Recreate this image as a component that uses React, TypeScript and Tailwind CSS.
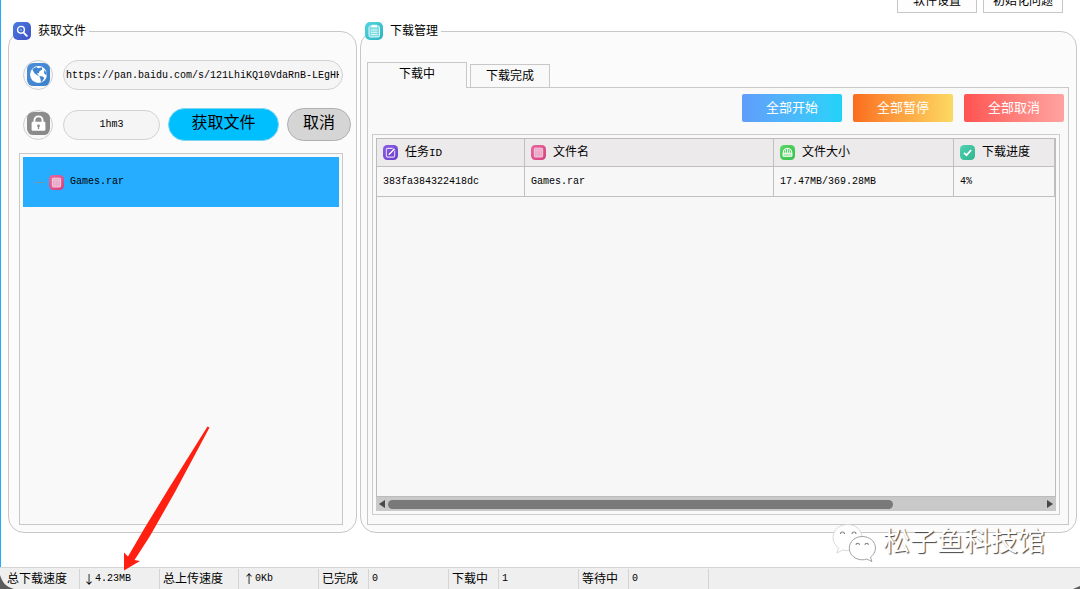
import type { ReactNode } from "react";

const LATIN = "font-['Liberation_Mono','Noto_Sans_CJK_SC',monospace] text-[10px]";

function Tile({ size, children, from, to, id }: { size: number; children: ReactNode; from: string; to: string; id: string }) {
  return (
    <svg width={size} height={size} viewBox="0 0 18 18" className="shrink-0" aria-hidden="true">
      <defs>
        <linearGradient id={id} x1="0" y1="0" x2="1" y2="1">
          <stop offset="0" stopColor={from} />
          <stop offset="1" stopColor={to} />
        </linearGradient>
      </defs>
      <rect width="18" height="18" rx="5" fill={`url(#${id})`} />
      {children}
    </svg>
  );
}

function SearchIcon() {
  return (
    <Tile size={18} id="search" from="#4a7be0" to="#3f52c4">
      <circle cx="8" cy="7.8" r="3.4" fill="none" stroke="#fff" strokeWidth="1.4" />
      <path d="M10.6 10.6 13.8 13.8" stroke="#fff" strokeWidth="1.9" strokeLinecap="round" />
      <circle cx="8" cy="7.8" r=".9" fill="#a9bff0" />
    </Tile>
  );
}

function ClipboardIcon() {
  return (
    <Tile size={18} id="clip" from="#52d6e0" to="#2bb3c0">
      <rect x="4" y="4" width="10.5" height="11" rx="1.5" fill="#7edbe2" stroke="#e6fbfc" strokeWidth="1" />
      <path d="M6.5 2.8h5.5v2.6H6.5z" fill="#f2fdfd" />
      <path d="M6 8h6.5M6 10.3h6.5M6 12.6h6.5" stroke="#eafcfc" strokeWidth=".9" />
    </Tile>
  );
}

function GlobeIcon() {
  return (
    <Tile size={23} id="globe" from="#4b90d8" to="#3a80cc">
      <circle cx="9" cy="9" r="6.6" fill="#fff" />
      <path d="M4.2 4.6 7.3 3.2 8.800 4.1 11.6 3.4 12 5 9.800 6.4 9.2 8 7.5 8.2 9.3 9.6 8.6 10 6.2 8.4 4.8 6.3z" fill="#3f86d0" />
      <path d="M9.6 10.2 12.2 10.6 13.6 11.8 11.9 14.3 10.9 14.8 10.5 12.4z" fill="#3f86d0" />
      <path d="M13.3 5.4 15.4 7.4 15.4 9.8 13.5 8.2z" fill="#3f86d0" />
    </Tile>
  );
}

function LockIcon() {
  return (
    <Tile size={23} id="lock" from="#8f8f8f" to="#888888">
      <path d="M5.800 8.4V6.6a3.200 3.200 0 0 1 6.400 0v1.8" fill="none" stroke="#fff" strokeWidth="1.5" />
      <rect x="3.6" y="7.6" width="10.8" height="7" rx="1" fill="#fff" />
      <circle cx="9" cy="10.8" r="1.1" fill="#888" />
      <path d="M8.5 11h1v2.3h-1z" fill="#888" />
    </Tile>
  );
}

function EditIcon() {
  return (
    <Tile size={15} id="edit" from="#8a5ce6" to="#6a3fc8">
      <rect x="4" y="4" width="10" height="10.5" rx="1.5" fill="none" stroke="#e4d8fb" strokeWidth="1.3" />
      <path d="M7 11.6 14.2 4" stroke="#7344cf" strokeWidth="3.6" />
      <path d="M7 11.6 13.8 4.4" stroke="#fff" strokeWidth="1.8" />
    </Tile>
  );
}

function FileIcon({ id }: { id: string }) {
  return (
    <Tile size={15} id={id} from="#e86a9e" to="#d63f80">
      <rect x="4" y="3.8" width="10" height="10.6" rx="1" fill="#e9a6c5" stroke="#f6dbe7" strokeWidth="1" />
      <path d="M7.2 4v10M10.8 4v10M4 6.8h10" stroke="#f2c6da" strokeWidth=".7" />
    </Tile>
  );
}

function SizeIcon() {
  return (
    <Tile size={15} id="size" from="#58d860" to="#38c050">
      <path d="M3.8 9.6C4 6.2 6 4.2 9 4.2s5 2 5.2 5.4" fill="none" stroke="#fff" strokeWidth="1.3" />
      <path d="M9 4v5.5M6.8 6v3.5M11.2 6v3.5" stroke="#fff" strokeWidth="1" />
      <rect x="3.4" y="9.6" width="11.2" height="4.2" rx=".8" fill="#d9f7dc" stroke="#fff" strokeWidth=".8" />
      <path d="M5 12h8" stroke="#64d36e" strokeWidth=".8" />
    </Tile>
  );
}

function CheckIcon() {
  return (
    <Tile size={15} id="check" from="#4fd0b4" to="#30b68c">
      <path d="M4.8 9.4 7.8 12.2 13.4 6" fill="none" stroke="#fff" strokeWidth="2.1" />
    </Tile>
  );
}

function Badge({ children }: { children: ReactNode }) {
  return (
    <span className="flex size-[30px] shrink-0 items-center justify-center rounded-full border border-[#cfcfcf] bg-[#f8f8f8] pb-0.5">
      {children}
    </span>
  );
}

function Head({ icon, children, className = "" }: { icon: ReactNode; children: ReactNode; className?: string }) {
  return (
    <th scope="col" className={`h-[28px] border-r border-b border-[#c0c0c0] p-0 text-left font-normal ${className}`}>
      <div className="flex items-center gap-[7px] pb-px pl-1.5 whitespace-nowrap">
        {icon}
        <span>{children}</span>
      </div>
    </th>
  );
}

const status: { text: string; label: boolean; width: string }[] = [
  { text: "总下载速度", label: true, width: "w-20 pl-[7px]" },
  { text: "↓4.23MB", label: false, width: "w-20 pl-[3px]" },
  { text: "总上传速度", label: true, width: "w-[79px] pl-[3px]" },
  { text: "↑0Kb", label: false, width: "w-20 pl-1" },
  { text: "已完成", label: true, width: "w-[50px] pl-[3px]" },
  { text: "0", label: false, width: "w-20 pl-[3px]" },
  { text: "下载中", label: true, width: "w-[50px] pl-[3px]" },
  { text: "1", label: false, width: "w-20 pl-[3px]" },
  { text: "等待中", label: true, width: "w-[50px] pl-[3px]" },
  { text: "0", label: false, width: "w-20 pl-[3px]" },
];

export default function App() {
  return (
    <div className="relative flex min-h-screen flex-col overflow-hidden bg-white font-['Liberation_Sans','Noto_Sans_CJK_SC',sans-serif] text-xs leading-4 text-black">
      <div className="flex flex-1 flex-col border-l border-[#22aaff]">
        <header className="flex h-[13px] shrink-0 items-end justify-end gap-1.5 overflow-hidden pr-[17px]">
          <button type="button" className="h-6 w-20 shrink-0 border border-[#c6c6c6] bg-[#fdfdfd]">软件设置</button>
          <button type="button" className="h-6 w-20 shrink-0 border border-[#c6c6c6] bg-[#fdfdfd]">初始化问题</button>
        </header>

        <main className="flex flex-1 gap-[3px] pt-[9px] pr-[3px] pb-[34px] pl-[7px]">
          <fieldset className="flex w-[349px] min-w-0 shrink-0 flex-col rounded-2xl border border-[#c8c8c8] bg-[#fbfbfb] pb-[7px]">
            <legend className="ml-1 flex h-[18px] items-center gap-[7px] pr-[3px]">
              <SearchIcon />
              获取文件
            </legend>
            <div className="flex flex-1 flex-col">
              <form className="flex flex-col gap-[18px] pt-5 pr-[5px] pl-[14px]" onSubmit={(e) => e.preventDefault()}>
                <div className="flex items-center gap-2.5 pr-2">
                  <Badge><GlobeIcon /></Badge>
                  <input
                    aria-label="链接"
                    defaultValue="https://pan.baidu.com/s/121LhiKQ10VdaRnB-LEgHH"
                    className={`h-[30px] w-0 min-w-0 flex-1 rounded-full border border-[#d2d2d2] bg-[#f5f5f5] pr-[3px] pl-0.5 ${LATIN}`}
                  />
                </div>
                <div className="flex items-center gap-2">
                  <Badge><LockIcon /></Badge>
                  <input
                    aria-label="提取码"
                    defaultValue="1hm3"
                    className={`ml-0.5 h-[30px] w-0 min-w-0 flex-1 rounded-full border border-[#d2d2d2] bg-[#f5f5f5] text-center ${LATIN}`}
                  />
                  <button type="submit" className="h-[33px] w-[111px] shrink-0 rounded-full border border-[#7fd4f2] bg-[#00bfff] pb-1 text-base">
                    获取文件
                  </button>
                  <button type="button" className="h-[33px] w-16 shrink-0 rounded-full border border-[#b0b0b0] bg-[#d5d5d5] pb-1 text-base">
                    取消
                  </button>
                </div>
              </form>
              <ul className="mt-3 mr-[13px] ml-2.5 flex-1 border border-[#c8c8c8] bg-[#f9f9f9] p-[3px]">
                <li className={`flex h-[50px] items-center bg-[#26adff] pl-[11px] ${LATIN}`}>
                  <span className="mr-1 h-px w-[11px] bg-[#6f9cb5]" />
                  <FileIcon id="tree-file" />
                  <span className="ml-1.5">Games.rar</span>
                </li>
              </ul>
            </div>
          </fieldset>

          <fieldset className="flex min-w-0 flex-1 flex-col rounded-2xl border border-[#c8c8c8] bg-[#fbfbfb] pb-[7px]">
            <legend className="ml-1 flex h-[18px] items-center gap-[7px] pr-[3px]">
              <ClipboardIcon />
              下载管理
            </legend>
            <div className="flex flex-1 flex-col pt-[22px] pr-[7px] pl-1.5">
              <div role="tablist" className="z-10 -mb-px flex items-end gap-[3px]">
                <button type="button" role="tab" aria-selected="true" className="h-[26px] w-[100px] border border-b-0 border-[#c8c8c8] bg-[#f9f9f9] pb-1">
                  下载中
                </button>
                <button type="button" role="tab" aria-selected="false" className="h-6 w-20 border border-[#c8c8c8] bg-[#f9f9f9]">
                  下载完成
                </button>
              </div>
              <section className="flex flex-1 flex-col border border-[#c8c8c8] bg-[#f9f9f9] px-1 pt-1.5 pb-[9px]">
                <div className="flex justify-end gap-[11px] text-[13px] text-white">
                  <button type="button" className="h-7 w-[100px] rounded-xs bg-linear-to-r from-[#5f9dfb] to-[#1dd3f9]">全部开始</button>
                  <button type="button" className="h-7 w-[100px] rounded-xs bg-linear-to-r from-[#f96c1e] to-[#fbd961]">全部暂停</button>
                  <button type="button" className="h-7 w-[100px] rounded-xs bg-linear-to-r from-[#ff5150] to-[#ffa3a1]">全部取消</button>
                </div>
                <div className="mt-3 mr-1 flex flex-1 flex-col border border-[#cccccc] p-[3px]">
                  <div className="flex-1 border border-[#bcbcbc] bg-[#f7f7f7]">
                    <table className="w-full table-fixed border-separate border-spacing-0">
                      <thead className="bg-[#eceaeb]">
                        <tr>
                          <Head icon={<EditIcon />} className="w-[148px]">任务<span className="font-['Liberation_Mono',monospace] text-[11px]">ID</span></Head>
                          <Head icon={<FileIcon id="head-file" />}>文件名</Head>
                          <Head icon={<SizeIcon />} className="w-[180px]">文件大小</Head>
                          <Head icon={<CheckIcon />} className="w-[101px]">下载进度</Head>
                        </tr>
                      </thead>
                      <tbody className={LATIN}>
                        <tr>
                          {["383fa384322418dc", "Games.rar", "17.47MB/369.28MB", "4%"].map((cell) => (
                            <td key={cell} className="h-[30px] border-r border-b border-[#c0c0c0] p-0 pl-1.5">{cell}</td>
                          ))}
                        </tr>
                      </tbody>
                    </table>
                  </div>
                  <div className="flex h-[14px] items-center gap-[3px] bg-[#c9c9c9] px-[3px]">
                    <svg width="6" height="8" viewBox="0 0 6 8" aria-hidden="true"><path d="M6 0v8L0 4z" fill="#484848" /></svg>
                    <div className="flex-1">
                      <div className="h-[9px] w-[77%] rounded-full bg-[#797979]" />
                    </div>
                    <svg width="6" height="8" viewBox="0 0 6 8" aria-hidden="true"><path d="M0 0v8l6-4z" fill="#484848" /></svg>
                  </div>
                </div>
              </section>
            </div>
          </fieldset>
        </main>
      </div>

      <footer className="relative flex h-[22px] shrink-0 border-t border-[#d4d4d4] bg-[#efefef] pt-px">
        {status.map((s, i) => (
          <div key={i} className={`flex shrink-0 items-center border-r border-[#d4d4d4] whitespace-nowrap ${s.width} ${s.label ? "" : LATIN}`}>
            {/^[↓↑]/.test(s.text) ? (
              <>
                <span className="w-3 text-center font-['Noto_Sans_CJK_SC',sans-serif] text-xs">{s.text[0]}</span>
                {s.text.slice(1)}
              </>
            ) : (
              s.text
            )}
          </div>
        ))}
        <svg className="absolute bottom-0 left-0" width="15" height="15" viewBox="0 0 15 15" aria-hidden="true">
          <path d="M0 1C2 8 6 13 14 15H0z" fill="#5b5b5b" />
        </svg>
        <svg className="absolute right-0 bottom-0" width="7" height="3" viewBox="0 0 7 3" aria-hidden="true">
          <path d="M0 3 7 0V3z" fill="#5b5b5b" />
        </svg>
      </footer>

      <svg className="pointer-events-none absolute bottom-[18px] left-[123px]" width="88" height="146" viewBox="123 425 88 146" aria-hidden="true">
        <path d="M207.5 426.5 209.5 427.5 175 492 150 536 134.5 560 140 561 124 570.5V552.5L128 556.5 144 529 169 488z" fill="#ff2012" />
      </svg>

      <div className="pointer-events-none absolute right-[35px] bottom-[27px] flex items-center gap-1.5">
        <svg width="45" height="40" viewBox="833 518 45 40" aria-hidden="true">
          <g fill="#fff" stroke="#8c8c8c" strokeWidth=".8">
            <path d="M848.5 520.5c-8.200 0-14.500 5.700-14.500 13 0 4.300 2 7.800 5.500 10.200l-1.700 5.300 6-3c1.500.4 3 .6 4.700.6 8.200 0 14.500-5.700 14.500-13.100s-6.300-13-14.500-13z" stroke="#cfcfcf" />
            <path d="M863.300 532.500c-7.200 0-13 5-13 11.600s5.800 11.700 13 11.700c1.600 0 3.200-.3 4.600-.8l5 2.600-1.400-4.500c3-2.200 5-5.300 5-9 0-6.600-6-11.600-13.200-11.600z" />
          </g>
          <g fill="none" stroke="#808080" strokeWidth="1.100">
            <path d="M841.500 530a2 2 0 0 1 4 0M853 530a2 2 0 0 1 4 0M857 541a1.700 1.700 0 0 1 3.400 0M866 541a1.700 1.700 0 0 1 3.400 0" />
          </g>
        </svg>
        <span className="text-[27px] leading-9 text-white [text-shadow:1px_1px_1px_#444]">松子鱼科技馆</span>
      </div>
    </div>
  );
}
